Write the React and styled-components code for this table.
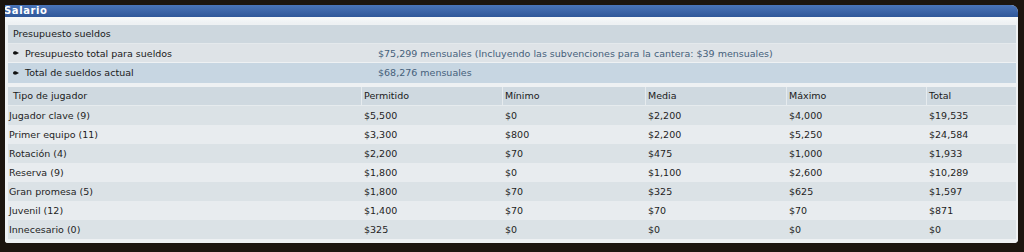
import React from 'react'
import styled, { createGlobalStyle } from 'styled-components'

const GlobalStyle = createGlobalStyle`
  html, body {
    margin: 0;
    padding: 0;
    background: #1c150f;
  }
  body {
    font-family: "DejaVu Sans", "Liberation Sans", sans-serif;
  }
`

const info = [
  {
    label: 'Presupuesto total para sueldos',
    value: '$75,299 mensuales (Incluyendo las subvenciones para la cantera: $39 mensuales)',
    tone: 'plain',
  },
  {
    label: 'Total de sueldos actual',
    value: '$68,276 mensuales',
    tone: 'blue',
  },
]

const columns = ['Tipo de jugador', 'Permitido', 'Mínimo', 'Media', 'Máximo', 'Total']

const rows = [
  ['Jugador clave (9)', '$5,500', '$0', '$2,200', '$4,000', '$19,535'],
  ['Primer equipo (11)', '$3,300', '$800', '$2,200', '$5,250', '$24,584'],
  ['Rotación (4)', '$2,200', '$70', '$475', '$1,000', '$1,933'],
  ['Reserva (9)', '$1,800', '$0', '$1,100', '$2,600', '$10,289'],
  ['Gran promesa (5)', '$1,800', '$70', '$325', '$625', '$1,597'],
  ['Juvenil (12)', '$1,400', '$70', '$70', '$70', '$871'],
  ['Innecesario (0)', '$325', '$0', '$0', '$0', '$0'],
]

const Bullet = () => (
  <svg width="6" height="4" viewBox="0 0 6 4">
    <path d="M0 2 C0 0.6 1.6 0 3.2 0.4 L6 2 L3.2 3.6 C1.6 4 0 3.4 0 2 Z" fill="#111" />
  </svg>
)

const App = () => (
  <>
    <GlobalStyle />
    <Page>
      <Panel>
        <TitleBar>Salario</TitleBar>
        <Body>
          <InfoSection>
            <InfoHeader>Presupuesto sueldos</InfoHeader>
            {info.map(({ label, value, tone }) => (
              <InfoRow key={label} tone={tone}>
                <InfoLabel>
                  <Bullet />
                  <span>{label}</span>
                </InfoLabel>
                <InfoValue>{value}</InfoValue>
              </InfoRow>
            ))}
          </InfoSection>

          <Table>
            {columns.map((col) => (
              <HeadCell key={col}>{col}</HeadCell>
            ))}
            {rows.map((row, idx) =>
              row.map((cell, c) => (
                <Cell key={`${idx}-${c}`} dark={idx % 2 === 0}>
                  {cell}
                </Cell>
              ))
            )}
          </Table>
        </Body>
      </Panel>
    </Page>
  </>
)

export default App

const Page = styled.div`
  width: 1024px;
  height: 252px;
  box-sizing: border-box;
  padding: 5px 6px 9px 5px;
  background: #1c150f;
`

const Panel = styled.section`
  display: flex;
  flex-direction: column;
  height: 100%;
  background: #eef1f3;
  border-radius: 0 7px 4px 3px;
  overflow: hidden;
`

const TitleBar = styled.div`
  height: 12px;
  line-height: 11px;
  background: linear-gradient(#4a74b8, #2f5799);
  color: #ffffff;
  font-size: 10px;
  font-weight: bold;
  letter-spacing: 0.6px;
  text-indent: -1px;
`

const Body = styled.div`
  display: flex;
  flex-direction: column;
  gap: 4px;
  padding: 8px 2px 0 3px;
  background: linear-gradient(#f7f9fa 0, #eef1f3 6px);
  flex: 1;
`

const InfoSection = styled.div`
  display: flex;
  flex-direction: column;
`

const InfoHeader = styled.div`
  height: 18px;
  line-height: 18px;
  padding-left: 5px;
  background: #cdd7de;
  border-bottom: 1px solid #e4e9ec;
  color: #1a1a1a;
  font-size: 9.5px;
`

const InfoRow = styled.div`
  display: flex;
  align-items: center;
  height: ${({ tone }) => (tone === 'blue' ? '19px' : '18px')};
  background: ${({ tone }) => (tone === 'blue' ? '#c7d6e2' : '#dee3e7')};
  border-bottom: 1px solid ${({ tone }) => (tone === 'blue' ? '#c7d6e2' : '#eef1f3')};
  font-size: 9.5px;
`

const InfoLabel = styled.div`
  display: flex;
  align-items: center;
  gap: 6px;
  width: 365px;
  padding-left: 5px;
  color: #1a1a1a;
`

const InfoValue = styled.div`
  color: #45607a;
`

const Table = styled.div`
  display: grid;
  grid-template-columns: 353px 141px 143px 141px 140px 1fr;
  grid-auto-rows: 19px;
  font-size: 9.5px;
`

const HeadCell = styled.div`
  height: 18px;
  line-height: 18px;
  padding-left: 2px;
  background: #cfd9e0;
  border-left: 1px solid #e6ebee;
  border-bottom: 1px solid #e6ebee;
  color: #1a1a1a;

  &:first-child {
    border-left: none;
    padding-left: 5px;
  }
`

const Cell = styled.div`
  line-height: 19px;
  padding-left: 3px;
  background: ${({ dark }) => (dark ? '#dbe2e6' : '#e8ecef')};
  color: #1e1e1e;
  white-space: nowrap;

  &:nth-child(6n + 1) {
    padding-left: 1px;
  }
`
